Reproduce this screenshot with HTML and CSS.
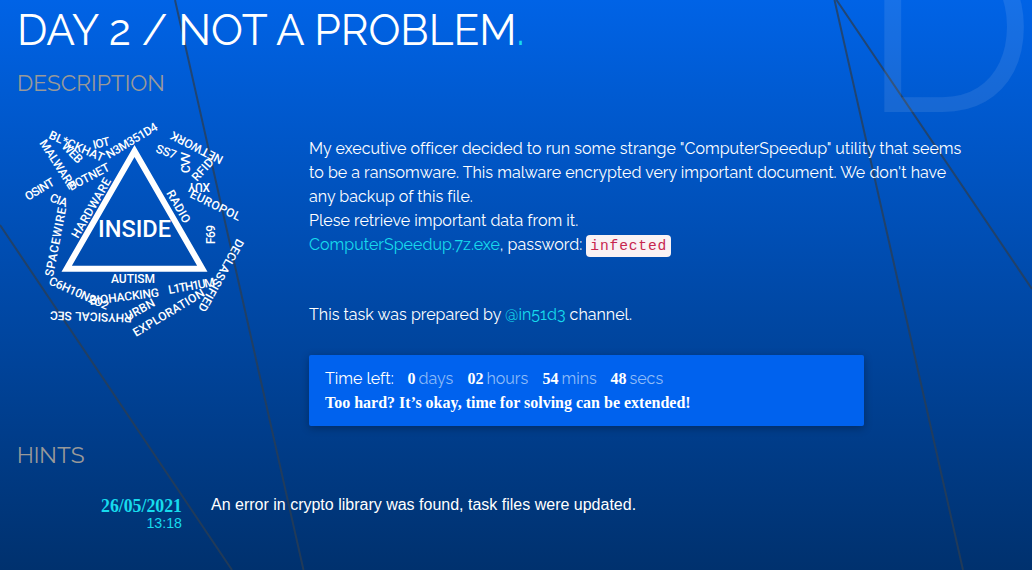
FILE: index.html
```html
<!DOCTYPE html>
<html lang="en">
<head>
<meta charset="utf-8">
<title>Day 2 / Not a problem</title>
<link rel="stylesheet" href="styles.css">
</head>
<body>
<svg class="backdrop" viewBox="0 0 1032 570" aria-hidden="true">
  <path d="M175 0 303.5 570M0 225 232 570M834.5 0 963 570M836.5 0 1032 289"/>
</svg>
<div class="watermark" aria-hidden="true">D</div>
<main class="page">
  <h1 class="title"><span>DAY 2 / NOT A PROBLEM</span><span class="dot">.</span></h1>
  <h2 class="heading description-heading">DESCRIPTION</h2>
  <section class="task">
    <svg class="logo" viewBox="17 112 240 234" role="img" aria-label="Inside">
      <path class="triangle" d="M134.5 151 202.3 268.7H66.7Z"/>
      <text class="name" x="98" y="237" textLength="73" lengthAdjust="spacingAndGlyphs">INSIDE</text>
      <g class="words">
        <text transform="translate(48 138) rotate(24)" textLength="59">BL*CKHAT</text>
        <text transform="translate(94 149) rotate(-14)" textLength="17">IOT</text>
        <text transform="translate(61 147) rotate(46)" textLength="24">WEB</text>
        <text transform="translate(39 143) rotate(57)" textLength="56">MALWARE</text>
        <text transform="translate(71 191) rotate(-28)" textLength="45">BOTNET</text>
        <text transform="translate(109 159) rotate(-31)" textLength="58">N3M351D4</text>
        <text transform="translate(28 201) rotate(-31)" textLength="32">OSINT</text>
        <text transform="translate(49 201) rotate(20)" textLength="18">CIA</text>
        <text transform="translate(78 239) rotate(-60)" textLength="67">HARDWARE</text>
        <text transform="translate(53 277) rotate(-79)" textLength="70">SPACEWIRE</text>
        <text transform="translate(166 193) rotate(60)" textLength="36">RADIO</text>
        <text transform="translate(155 152) rotate(20)" textLength="21">SS7</text>
        <text transform="translate(224 157) rotate(-153)" textLength="57">NETWORK</text>
        <text transform="translate(190 173) rotate(-90)" textLength="21">CVV</text>
        <text transform="translate(197 182) rotate(-48)" textLength="26">RFID</text>
        <text transform="translate(210 183) rotate(180)" textLength="22">XUY</text>
        <text transform="translate(189 197) rotate(26)" textLength="55">EUROPOL</text>
        <text transform="translate(215 244) rotate(-90)" textLength="19">F69</text>
        <text transform="translate(237 238) rotate(119)" textLength="81">DECLASSIFIED</text>
        <text transform="translate(111 283)" textLength="44">AUTISM</text>
        <text transform="translate(90 305) rotate(-7)" textLength="70">BIOHACKING</text>
        <text transform="translate(169 294) rotate(-10)" textLength="47">L1TH1UM</text>
        <text transform="translate(48 284) rotate(24)" textLength="64">C6H10N2O2</text>
        <text transform="translate(128 321) rotate(-29)" textLength="32">URBN</text>
        <text transform="translate(136 337) rotate(-31)" textLength="81">EXPLORATION</text>
        <text transform="translate(132 314) rotate(-178)" textLength="82">PHYSICAL SEC</text>
      </g>
    </svg>
    <div class="content">
      <p class="text">
        <span class="line">My executive officer decided to run some strange "ComputerSpeedup" utility that seems</span>
        <span class="line">to be a ransomware. This malware encrypted very important document. We don't have</span>
        <span class="line">any backup of this file.</span>
        <span class="line">Plese retrieve important data from it.</span>
        <span class="line"><a class="link">ComputerSpeedup.7z.exe</a>, password: <code class="code">infected</code></span>
      </p>
      <p class="text credit">This task was prepared by <a class="link">@in51d3</a> channel.</p>
      <div class="timer">
        <div class="countdown">
          <span class="label">Time left:</span>
          <span class="unit days"><b>0</b>days</span>
          <span class="unit hours"><b>02</b>hours</span>
          <span class="unit mins"><b>54</b>mins</span>
          <span class="unit"><b>48</b>secs</span>
        </div>
        <div class="extend">Too hard? It’s okay, time for solving can be extended!</div>
      </div>
    </div>
  </section>
  <h2 class="heading hints-heading">HINTS</h2>
  <section class="hint">
    <div class="when"><span class="date">26/05/2021</span><span class="time">13:18</span></div>
    <div class="message">An error in crypto library was found, task files were updated.</div>
  </section>
</main>
</body>
</html>
```
FILE: styles.css
```css
* { box-sizing: border-box; }
body {
  margin: 0;
  height: 570px;
  position: relative;
  overflow: hidden;
  color: #fff;
  background: linear-gradient(#0063e6, #00316e);
  font-family: Raleway, Lato, sans-serif;
}
.backdrop { position: absolute; inset: 0; width: 1032px; height: 570px; }
.backdrop path { fill: none; stroke: #2c3e50; stroke-opacity: .75; stroke-width: 2; }
.watermark {
  position: absolute;
  left: 863px;
  top: -113px;
  font: 240px/280px Raleway, Lato, sans-serif;
  color: rgba(255, 255, 255, .09);
}
.page { position: relative; padding-left: 17px; }
.title { margin: 0; height: 66px; font-size: 42.5px; line-height: 60px; font-weight: 400; white-space: nowrap; }
.dot, .link { color: #17dbed; }
.heading { margin: 0; color: #999; font-size: 22.7px; line-height: 34px; font-weight: 400; }
.task { display: flex; margin-top: 12px; height: 314px; }
.logo { flex: none; width: 240px; height: 234px; }
.triangle { fill: none; stroke: #fff; stroke-width: 6; }
.name { font: 500 23px Roboto, sans-serif; fill: #fff; }
.words { font: 500 12px Roboto, sans-serif; fill: #fff; }
.content { margin: 25px 0 0 52px; width: 680px; }
.text { margin: 0; font-size: 16px; line-height: 24px; letter-spacing: .02px; font-variant-ligatures: common-ligatures; white-space: nowrap; }
.line { display: block; }
.code {
  padding: 2px 4px;
  border-radius: 4px;
  background: #f9f2f4;
  color: #c7254e;
  font: 14.6px/18px "Liberation Mono", monospace;
  letter-spacing: .84px;
  padding-block: 3px;
}
.credit { margin-top: 46px; }
.timer {
  width: 555px;
  height: 71px;
  margin-top: 28px;
  padding: 12px 16px;
  border-radius: 2px;
  background: #0062ee;
  box-shadow: 0 2px 8px rgba(0, 0, 0, .3);
}
.countdown { display: flex; font-size: 16px; line-height: 24px; }
.label { width: 82.5px; }
.unit { color: #8fbcf8; }
.unit b { margin-right: 3px; color: #fff; font-family: "Liberation Serif", serif; }
.days { width: 60px; }
.hours { width: 75px; }
.mins { width: 68px; }
.extend { font: bold 16px/24px "Liberation Serif", serif; }
.hints-heading { margin-top: 12px; }
.hint { display: flex; margin-top: 24px; }
.when { width: 165px; color: #17dbed; text-align: right; }
.date, .time { display: block; }
.date { font: bold 17.8px/20px "Liberation Serif", serif; }
.time { font: 14.2px/14px "Liberation Sans", sans-serif; }
.message { margin-left: 29px; font: 16px/18px "Liberation Sans", sans-serif; }
```
